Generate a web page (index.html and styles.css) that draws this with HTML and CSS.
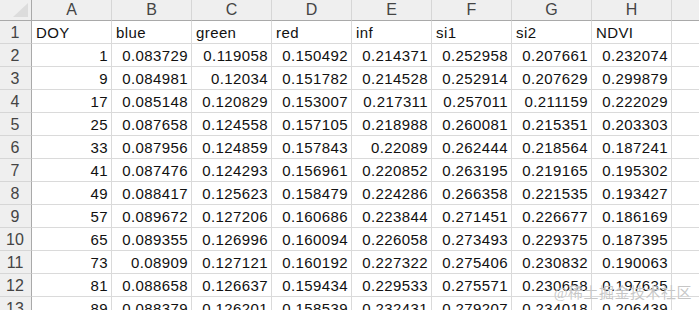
FILE: index.html
```html
<!DOCTYPE html>
<html lang="zh">
<head>
<meta charset="utf-8">
<title>Sheet</title>
<link rel="stylesheet" href="styles.css">
</head>
<body>
<div class="sheet">
  <div class="corner"><svg class="tri" width="31" height="20" viewBox="0 0 31 20"><polygon points="13,17 28,17 28,3" fill="#dcdcdc"/></svg></div>
  <div class="colh">A</div><div class="colh">B</div><div class="colh">C</div><div class="colh">D</div><div class="colh">E</div><div class="colh">F</div><div class="colh">G</div><div class="colh">H</div><div class="colh"></div>

  <div class="rowh">1</div><div class="c t">DOY</div><div class="c t">blue</div><div class="c t">green</div><div class="c t">red</div><div class="c t">inf</div><div class="c t">si1</div><div class="c t">si2</div><div class="c t">NDVI</div><div class="c"></div>
  <div class="rowh">2</div><div class="c">1</div><div class="c">0.083729</div><div class="c">0.119058</div><div class="c">0.150492</div><div class="c">0.214371</div><div class="c">0.252958</div><div class="c">0.207661</div><div class="c">0.232074</div><div class="c"></div>
  <div class="rowh">3</div><div class="c">9</div><div class="c">0.084981</div><div class="c">0.12034</div><div class="c">0.151782</div><div class="c">0.214528</div><div class="c">0.252914</div><div class="c">0.207629</div><div class="c">0.299879</div><div class="c"></div>
  <div class="rowh">4</div><div class="c">17</div><div class="c">0.085148</div><div class="c">0.120829</div><div class="c">0.153007</div><div class="c">0.217311</div><div class="c">0.257011</div><div class="c">0.211159</div><div class="c">0.222029</div><div class="c"></div>
  <div class="rowh">5</div><div class="c">25</div><div class="c">0.087658</div><div class="c">0.124558</div><div class="c">0.157105</div><div class="c">0.218988</div><div class="c">0.260081</div><div class="c">0.215351</div><div class="c">0.203303</div><div class="c"></div>
  <div class="rowh">6</div><div class="c">33</div><div class="c">0.087956</div><div class="c">0.124859</div><div class="c">0.157843</div><div class="c">0.22089</div><div class="c">0.262444</div><div class="c">0.218564</div><div class="c">0.187241</div><div class="c"></div>
  <div class="rowh">7</div><div class="c">41</div><div class="c">0.087476</div><div class="c">0.124293</div><div class="c">0.156961</div><div class="c">0.220852</div><div class="c">0.263195</div><div class="c">0.219165</div><div class="c">0.195302</div><div class="c"></div>
  <div class="rowh">8</div><div class="c">49</div><div class="c">0.088417</div><div class="c">0.125623</div><div class="c">0.158479</div><div class="c">0.224286</div><div class="c">0.266358</div><div class="c">0.221535</div><div class="c">0.193427</div><div class="c"></div>
  <div class="rowh">9</div><div class="c">57</div><div class="c">0.089672</div><div class="c">0.127206</div><div class="c">0.160686</div><div class="c">0.223844</div><div class="c">0.271451</div><div class="c">0.226677</div><div class="c">0.186169</div><div class="c"></div>
  <div class="rowh">10</div><div class="c">65</div><div class="c">0.089355</div><div class="c">0.126996</div><div class="c">0.160094</div><div class="c">0.226058</div><div class="c">0.273493</div><div class="c">0.229375</div><div class="c">0.187395</div><div class="c"></div>
  <div class="rowh">11</div><div class="c">73</div><div class="c">0.08909</div><div class="c">0.127121</div><div class="c">0.160192</div><div class="c">0.227322</div><div class="c">0.275406</div><div class="c">0.230832</div><div class="c">0.190063</div><div class="c"></div>
  <div class="rowh">12</div><div class="c">81</div><div class="c">0.088658</div><div class="c">0.126637</div><div class="c">0.159434</div><div class="c">0.229533</div><div class="c">0.275571</div><div class="c">0.230658</div><div class="c">0.197635</div><div class="c"></div>
  <div class="rowh">13</div><div class="c">89</div><div class="c">0.088379</div><div class="c">0.126201</div><div class="c">0.158539</div><div class="c">0.232431</div><div class="c">0.279207</div><div class="c">0.234018</div><div class="c">0.206439</div><div class="c"></div>
</div>
<div class="watermark">@稀土掘金技术社区</div>
</body>
</html>
```
FILE: styles.css
```css
html, body {
  margin: 0;
  padding: 0;
  background: #ffffff;
  overflow: hidden;
  width: 699px;
  height: 310px;
}
body {
  position: relative;
  font-family: "Liberation Sans", Arial, "Noto Sans CJK SC", sans-serif;
}
.sheet {
  display: grid;
  grid-template-columns: 32px repeat(8, 80px) 40px;
  grid-template-rows: 21px repeat(13, 23px);
  width: 712px;
}
.sheet > div {
  box-sizing: border-box;
  white-space: nowrap;
  overflow: hidden;
}
.corner {
  background: #efefef;
  border-right: 1px solid #a9a9a9;
  border-bottom: 1px solid #a9a9a9;
  position: relative;
}
.tri {
  display: block;
}
.colh {
  background: #efefef;
  border-right: 1px solid #d6d6d6;
  border-bottom: 1px solid #a9a9a9;
  color: #444;
  font-size: 16px;
  line-height: 20px;
  text-align: center;
}
.rowh {
  background: #efefef;
  border-right: 1px solid #a9a9a9;
  border-bottom: 1px solid #d6d6d6;
  color: #444;
  font-size: 16px;
  line-height: 23px;
  text-align: center;
  padding-right: 1px;
}
.c {
  border-right: 1px solid #dadada;
  border-bottom: 1px solid #dadada;
  color: #111;
  font-size: 15px;
  letter-spacing: 0.4px;
  line-height: 23px;
  text-align: right;
  padding-right: 3px;
}
.c.t {
  text-align: left;
  padding-left: 4px;
  padding-right: 0;
}
.watermark {
  position: absolute;
  right: 7px;
  bottom: 8px;
  font-family: "Liberation Serif", "Noto Sans CJK SC", serif;
  font-size: 15px;
  color: rgba(180, 180, 180, 0.75);
  letter-spacing: 0.5px;
  text-shadow: 0 0 1px #fff;
}
```
